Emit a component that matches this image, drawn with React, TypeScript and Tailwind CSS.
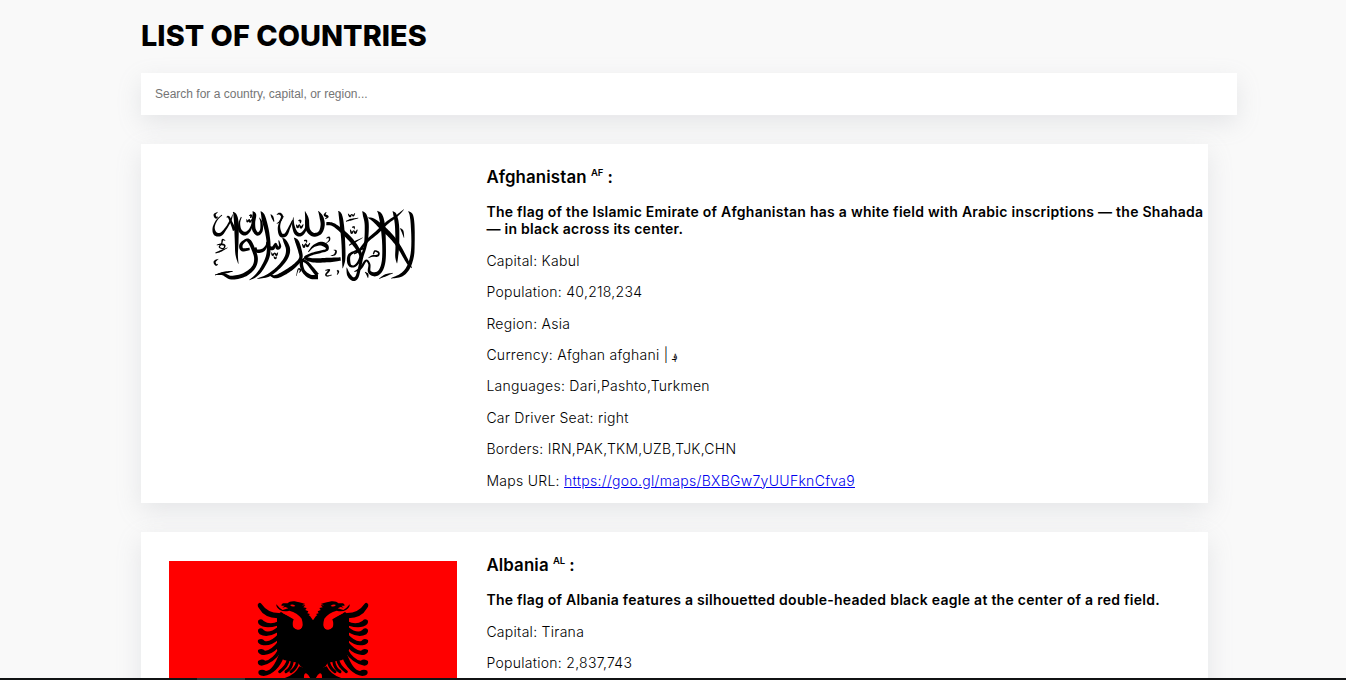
import React from "react";

type Country = {
  name: string;
  code: string;
  flagText: string;
  facts: [string, React.ReactNode][];
  map: string;
  flag: React.ReactNode;
};

// A brush stroke is a list of x, y, width triples.
type Stroke = number[][];

// Turns a stroke into a filled outline that swells and tapers with the given widths.
function brush(points: Stroke): string {
  const samples: number[][] = [];
  const steps = 8;
  for (let i = 0; i < points.length - 1; i++) {
    const a = points[Math.max(0, i - 1)];
    const b = points[i];
    const c = points[i + 1];
    const d = points[Math.min(points.length - 1, i + 2)];
    for (let s = 0; s < steps; s++) {
      const t = s / steps;
      samples.push(
        [0, 1, 2].map(
          (k) =>
            0.5 *
            (2 * b[k] +
              (c[k] - a[k]) * t +
              (2 * a[k] - 5 * b[k] + 4 * c[k] - d[k]) * t * t +
              (3 * b[k] - a[k] - 3 * c[k] + d[k]) * t * t * t),
        ),
      );
    }
  }
  samples.push(points[points.length - 1]);
  const left: string[] = [];
  const right: string[] = [];
  samples.forEach((p, i) => {
    const before = samples[Math.max(0, i - 1)];
    const after = samples[Math.min(samples.length - 1, i + 1)];
    const dx = after[0] - before[0];
    const dy = after[1] - before[1];
    const half = Math.max(0.6, p[2] * 0.62) / (Math.hypot(dx, dy) || 1);
    left.push(`${(p[0] - dy * half).toFixed(1)} ${(p[1] + dx * half).toFixed(1)}`);
    right.unshift(`${(p[0] + dy * half).toFixed(1)} ${(p[1] - dx * half).toFixed(1)}`);
  });
  return `M${left.concat(right).join("L")}Z`;
}

const strokes: Stroke[] = [
  // upper left
  [[53, 51, 1], [44, 59, 5], [48, 68, 5], [54, 65, 1]],
  [[66, 60, 2], [50, 76, 3], [41, 98, 5], [46, 116, 9], [62, 118, 8], [78, 100, 5], [92, 76, 4], [98, 58, 1]],
  [[80, 67, 2], [86, 66, 5], [95, 85, 6], [104, 106, 9]],
  [[99, 51, 1], [105, 60, 8], [109, 85, 11], [110, 140, 9], [110, 178, 6], [115, 206, 1]],
  [[124, 66, 2], [118, 84, 4], [120, 106, 8], [134, 116, 9], [148, 107, 6], [157, 88, 4]],
  [[158, 49, 1], [163, 59, 9], [160, 82, 9], [162, 104, 9], [173, 117, 8], [184, 106, 7], [184, 82, 5], [178, 68, 1]],
  [[182, 49, 1], [188, 59, 8], [193, 78, 11], [201, 110, 10], [206, 150, 9], [203, 185, 9], [186, 220, 8], [168, 242, 6], [148, 255, 1]],
  [[140, 72, 1], [142, 80, 4], [148, 74, 3], [150, 81, 4], [157, 72, 2]],
  [[147, 62, 1], [153, 61, 5], [152, 69, 3]],
  [[212, 58, 1], [217, 66, 5], [222, 80, 2]],
  [[230, 59, 1], [239, 56, 5], [246, 64, 5], [240, 79, 4], [230, 86, 1]],
  // lower left
  [[50, 150, 1], [62, 148, 4], [74, 151, 4], [70, 161, 3], [58, 156, 3], [65, 145, 3], [68, 134, 4], [76, 137, 1]],
  [[46, 174, 2], [60, 169, 4], [83, 158, 1]],
  [[55, 192, 1], [44, 200, 5], [48, 210, 4], [54, 207, 1]],
  [[45, 240, 1], [68, 237, 6], [94, 248, 9], [132, 240, 10], [160, 218, 9], [168, 190, 9], [158, 158, 9], [147, 138, 9], [136, 136, 6], [123, 150, 8], [127, 164, 8], [149, 162, 6]],
  [[98, 229, 2], [72, 233, 5], [45, 240, 1]],
  [[167, 157, 4], [170, 168, 8], [188, 166, 8], [199, 153, 5], [200, 140, 2]],
  [[203, 156, 8], [218, 160, 9], [227, 146, 4], [232, 159, 8], [240, 154, 6], [236, 136, 2]],
  [[214, 172, 1], [218, 180, 5], [224, 174, 2], [229, 180, 5], [234, 172, 1]],
  [[221, 184, 1], [226, 190, 5], [230, 184, 1]],
  [[247, 128, 1], [255, 139, 8], [264, 162, 10], [259, 187, 9], [237, 216, 8], [205, 241, 7], [171, 251, 1]],
  // upper centre
  [[252, 63, 1], [242, 78, 3], [237, 98, 6], [243, 120, 9], [257, 119, 8], [268, 98, 5], [278, 76, 3]],
  [[280, 67, 1], [280, 92, 6], [289, 115, 9], [304, 118, 8], [318, 100, 6], [321, 74, 9], [315, 49, 1]],
  [[321, 75, 10], [324, 104, 10], [340, 119, 9], [360, 113, 9], [368, 90, 10], [364, 66, 9], [355, 48, 1]],
  [[289, 89, 2], [293, 97, 5], [298, 89, 2], [303, 98, 5], [310, 88, 2]],
  [[295, 77, 2], [301, 77, 5], [301, 85, 2]],
  [[379, 51, 1], [374, 60, 5], [383, 65, 5], [375, 72, 1]],
  // lower centre
  [[282, 128, 1], [291, 140, 9], [300, 168, 9], [302, 190, 8], [285, 211, 9], [256, 232, 10], [226, 245, 8], [205, 237, 1]],
  [[307, 147, 2], [312, 156, 5], [317, 146, 2], [322, 154, 5], [330, 144, 2]],
  [[312, 137, 3], [319, 137, 4], [320, 144, 1]],
  [[325, 171, 2], [340, 154, 5], [361, 146, 9], [378, 152, 10], [381, 164, 6], [363, 170, 6], [336, 177, 6], [316, 188, 7], [340, 196, 10], [385, 195, 11], [422, 192, 8]],
  [[312, 190, 4], [304, 205, 8], [311, 229, 8], [331, 245, 10], [354, 246, 11]],
  [[304, 195, 6], [320, 202, 7], [336, 220, 8], [352, 240, 9]],
  [[289, 243, 1], [295, 222, 3], [302, 226, 4], [297, 233, 1]],
  [[376, 226, 2], [388, 225, 4], [378, 238, 4], [382, 243, 3], [395, 240, 2]],
  [[412, 226, 4], [415, 231, 4], [411, 240, 1]],
  [[378, 130, 1], [387, 127, 4], [388, 136, 3], [378, 145, 1]],
  [[392, 182, 1], [404, 179, 4], [408, 168, 4], [401, 165, 1]],
  // right
  [[379, 86, 8], [400, 89, 8], [430, 112, 10], [458, 141, 10], [480, 174, 8], [480, 193, 7], [466, 212, 5], [452, 213, 6], [446, 200, 8], [448, 181, 7], [464, 170, 5], [492, 160, 4]],
  [[415, 48, 1], [421, 60, 8], [426, 93, 10], [430, 145, 9], [431, 192, 8], [428, 220, 1]],
  [[444, 56, 1], [450, 64, 5], [455, 58, 2], [460, 62, 4], [465, 54, 1]],
  [[438, 79, 2], [453, 74, 4], [475, 69, 1]],
  [[451, 104, 2], [455, 114, 5], [461, 107, 2], [466, 114, 5], [472, 104, 2]],
  [[456, 97, 2], [462, 96, 4], [463, 103, 1]],
  [[447, 151, 2], [464, 141, 4], [488, 128, 1]],
  [[487, 49, 1], [494, 60, 9], [500, 86, 10], [499, 130, 9], [494, 160, 7], [486, 185, 7], [478, 221, 7], [470, 247, 8], [458, 252, 9], [446, 239, 8], [440, 218, 1]],
  [[505, 68, 2], [522, 76, 8], [550, 101, 12], [577, 128, 11], [600, 160, 9], [624, 203, 7], [636, 219, 1]],
  [[612, 43, 1], [590, 63, 5], [562, 83, 7], [530, 113, 8], [502, 137, 7], [478, 166, 5], [462, 177, 3]],
  [[532, 48, 1], [541, 60, 9], [548, 90, 11], [552, 145, 9], [551, 198, 9], [541, 228, 9], [524, 238, 10], [508, 230, 7], [508, 208, 5], [498, 197, 5], [481, 220, 6], [463, 230, 2]],
  [[505, 189, 1], [517, 183, 4], [533, 182, 5], [536, 173, 4], [525, 168, 4], [520, 178, 3]],
  [[578, 49, 1], [585, 60, 8], [591, 92, 10], [592, 150, 9], [590, 185, 7], [591, 205, 1]],
  [[625, 49, 1], [634, 61, 8], [638, 92, 9], [639, 145, 8], [636, 184, 9], [624, 219, 9], [604, 240, 8], [573, 250, 1]],
  [[495, 231, 1], [502, 238, 5], [504, 249, 1]],
  [[537, 251, 1], [557, 241, 5], [579, 234, 1]],
  [[600, 100, 1], [607, 108, 5], [612, 128, 1]],
];

function AfghanFlag() {
  return (
    <svg viewBox="-93 -66 864 432" className="block h-[144px] w-[288px]" aria-label="Flag of Afghanistan">
      <rect x="-93" y="-66" width="864" height="432" fill="#fff" />
      {strokes.map((stroke, i) => (
        <path key={i} d={brush(stroke)} />
      ))}
    </svg>
  );
}

function EagleHalf() {
  return (
    <g>
      <path d="M205 92 L195 78 L191 76 L195 72 L187 70 L190 64 L181 60 L185 54 L175 52 L181 46 L170 46 L181 42 Q160 36 149 34 Q133 33 128 40 L114 40 Q109 43 109 47 L119 47 L112 53 L121 51 L130 55 L113 60 Q103 55 94 43 Q93 53 105 60 Q117 67 133 62 Q157 68 170 86 Q177 110 167 117 Q154 123 145 112 Q141 101 146 88 L108 66 L96 74 L96 180 L104 192 L116 210 L137 214 L160 219 L166 228 L182 240 L172 251 L165 265 L184 265 L188 252 L196 265 L205 265 Z" />
      <path d="M135 45 Q142 41 151 47 Q143 53 135 45" fill="#f00" />
      <path d="M152 90 Q134 77 113 70 Q136 65 154 76 Q172 86 172 107 Q170 118 159 118 Q148 116 148 105 Z" fill="#f00" />
      <path d="M38 44 Q43 34 49 41 Q69 70 104 69 L98 85 Q58 84 42 55 Q38 50 38 44 Z" />
      <path d="M40 91 Q50 84 56 93 Q75 106 100 94 L97 107 Q59 119 41 102 Q37 96 40 91 Z" />
      <path d="M39 119 Q49 110 57 121 Q72 132 99 110 L98 127 Q67 145 44 133 Q37 128 39 119 Z" />
      <path d="M39 150 Q51 142 59 153 Q76 158 99 133 L98 151 Q75 171 48 164 Q36 160 39 150 Z" />
      <path d="M39 180 Q51 173 60 182 Q77 183 100 154 L101 172 Q76 199 49 194 Q37 190 39 180 Z" />
      <path d="M39 213 Q50 204 61 212 Q81 211 102 175 L110 184 Q85 222 50 227 Q36 226 39 213 Z" />
      <path d="M41 242 Q52 236 63 243 Q84 242 103 190 L117 200 Q98 250 56 258 Q36 256 41 242 Z" />
      <g fill="none" stroke="#000" strokeWidth="9" strokeLinecap="round">
        <path d="M130 208 Q127 229 104 245" />
        <path d="M142 213 Q139 236 123 245" />
        <path d="M157 219 Q151 237 138 245" />
      </g>
      <path d="M116 265 Q150 256 163 229 L184 236 L176 265 Z" />
      <path d="M177 265 Q176 251 183 250 Q190 252 189 265 Z" fill="#f00" />
    </g>
  );
}

function AlbaniaFlag() {
  return (
    <svg viewBox="-228 -87 864 618" className="block h-[206px] w-[288px]" aria-label="Flag of Albania">
      <rect x="-228" y="-87" width="864" height="618" fill="#f00" />
      <EagleHalf />
      <g transform="translate(408 0) scale(-1 1)">
        <EagleHalf />
      </g>
    </svg>
  );
}

const countries: Country[] = [
  {
    name: "Afghanistan",
    code: "AF",
    flagText:
      "The flag of the Islamic Emirate of Afghanistan has a white field with Arabic inscriptions — the Shahada — in black across its center.",
    facts: [
      ["Capital", "Kabul"],
      ["Population", "40,218,234"],
      ["Region", "Asia"],
      [
        "Currency",
        <>
          Afghan afghani |<span className="ml-[3px] text-[10px] leading-none">؋</span>
        </>,
      ],
      ["Languages", "Dari,Pashto,Turkmen"],
      ["Car Driver Seat", "right"],
      ["Borders", "IRN,PAK,TKM,UZB,TJK,CHN"],
    ],
    map: "https://goo.gl/maps/BXBGw7yUUFknCfva9",
    flag: <AfghanFlag />,
  },
  {
    name: "Albania",
    code: "AL",
    flagText: "The flag of Albania features a silhouetted double-headed black eagle at the center of a red field.",
    facts: [
      ["Capital", "Tirana"],
      ["Population", "2,837,743"],
    ],
    map: "",
    flag: <AlbaniaFlag />,
  },
];

function CountryCard({ country }: { country: Country }) {
  return (
    <article className="flex h-[359px] w-[1067px] shrink-0 bg-white shadow-[0_8px_24px_rgba(149,157,165,0.2)]">
      <div className="ml-7 mt-[29px] w-[288px] shrink-0">{country.flag}</div>
      <div className="ml-[29.4px] min-w-0 flex-1 pt-[23px] text-[14px] leading-[17px] tracking-[0.28px]">
        <h3 className="mb-[16.4px] h-5 text-[16.85px] font-semibold leading-5 tracking-[0.13px]">
          {country.name} <sup className="top-[-7px] text-[9.5px] leading-none tracking-[-0.2px]">{country.code}</sup> :
        </h3>
        <h4 className="mb-[14.4px] font-semibold tracking-[0.265px]">{country.flagText}</h4>
        {country.facts.map(([label, value]) => (
          <p key={label} className="mb-[14.4px] h-[17px] font-light">
            {label}: {value}
          </p>
        ))}
        {country.map && (
          <p className="font-light">
            Maps URL:{" "}
            <a href={country.map} className="text-[#0000ee] underline tracking-[0.3px]">
              {country.map}
            </a>
          </p>
        )}
      </div>
    </article>
  );
}

export default function App() {
  return (
    <div className="flex h-[680px] flex-col overflow-hidden bg-[#f9f9f9] text-black [font-family:Inter,sans-serif]">
      <main className="flex h-[678px] shrink-0 flex-col overflow-hidden pl-[141px]">
        <h1 className="mt-[18px] h-[35px] shrink-0 text-[28.8px] font-extrabold leading-[35px] tracking-[0.06px]">
          LIST OF COUNTRIES
        </h1>
        <input
          type="text"
          placeholder="Search for a country, capital, or region..."
          className="mt-5 h-[42px] w-[1096px] shrink-0 bg-white px-3.5 text-[12px] shadow-[0_8px_24px_rgba(149,157,165,0.2)] outline-none [font-family:'Liberation_Sans',sans-serif] placeholder:text-[#757575]"
        />
        <div className="mt-[29px] flex flex-col gap-[29px]">
          {countries.map((country) => (
            <CountryCard key={country.code} country={country} />
          ))}
        </div>
      </main>
      <div className="h-0.5 shrink-0 bg-[#111314] pl-[197px]">
        <div className="h-0.5 w-12 bg-[#333637]" />
      </div>
    </div>
  );
}
